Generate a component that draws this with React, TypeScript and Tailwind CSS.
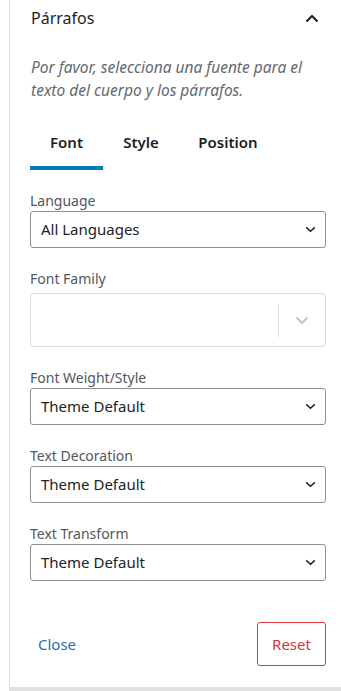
import React from "react";

const Chevron = ({ className = "" }: { className?: string }) => (
  <svg width="11" height="7" viewBox="0 0 11 7" className={className}>
    <path d="M1.2 1.4 L5.5 5.3 L9.8 1.4" fill="none" stroke="currentColor" strokeWidth="1.5" />
  </svg>
);

const Select = ({ label, value }: { label: string; value: string }) => (
  <div className="flex flex-col">
    <div className="text-[14px] leading-[19px] text-[#50575e]">{label}</div>
    <div className="mt-[1px] flex h-[37px] items-center justify-between rounded-[3px] border border-[#8c8f94] pl-[10px] pr-[9px] bg-white">
      <span className="text-[15px] text-[#1d2327]">{value}</span>
      <Chevron className="text-[#1d2327]" />
    </div>
  </div>
);

export default function App() {
  return (
    <div
      className="w-[341px] h-[691px] bg-white flex"
      style={{ fontFamily: '"Noto Sans", "Open Sans", sans-serif' }}
    >
      <div className="w-[9px] shrink-0" />
      <div className="flex-1 flex flex-col border-l border-[#dcdcde] border-b-[4px] border-b-[#e0e0e0]">
        <div className="flex items-center justify-between pl-[21px] pr-[22px] pt-[2px] h-[34px]">
          <span className="text-[16px] text-[#1e1e1e]">Párrafos</span>
          <svg width="14" height="9" viewBox="0 0 14 9" className="text-[#1e1e1e]">
            <path d="M1.5 7.5 L7 2 L12.5 7.5" fill="none" stroke="currentColor" strokeWidth="2" />
          </svg>
        </div>
        <div className="pl-[21px] pr-[20px] mt-[22px] text-[15.5px] italic leading-[23px] text-[#646970]">
          Por favor, selecciona una fuente para el texto del cuerpo y los párrafos.
        </div>
        <div className="mt-[29px] ml-[20px] flex">
          <div className="w-[73px] flex flex-col items-center">
            <span className="text-[15px] font-semibold text-[#1e1e1e] leading-[22px] h-[22px]">Font</span>
            <div className="mt-[13px] h-[4px] w-full bg-[#007cba]" />
          </div>
          <div className="w-[76px] flex justify-center">
            <span className="text-[15px] font-semibold text-[#1e1e1e] leading-[22px]">Style</span>
          </div>
          <div className="w-[98px] flex justify-center">
            <span className="text-[15px] font-semibold text-[#1e1e1e] leading-[22px]">Position</span>
          </div>
        </div>
        <div className="mt-[21px] ml-[20px] mr-[15px] flex flex-col gap-[21px]">
          <Select label="Language" value="All Languages" />
          <div className="flex flex-col">
            <div className="text-[14px] leading-[19px] text-[#50575e]">Font Family</div>
            <div className="mt-[5px] flex h-[54px] items-center rounded-[4px] border border-[#dcdcde] bg-white">
              <div className="flex-1" />
              <div className="h-[33px] w-px bg-[#dcdcde]" />
              <div className="w-[46px] flex justify-center">
                <svg width="14" height="9" viewBox="0 0 14 9" className="text-[#c3c4c7]">
                  <path d="M1.5 1.5 L7 7 L12.5 1.5" fill="none" stroke="currentColor" strokeWidth="2" />
                </svg>
              </div>
            </div>
          </div>
          <Select label="Font Weight/Style" value="Theme Default" />
          <Select label="Text Decoration" value="Theme Default" />
          <Select label="Text Transform" value="Theme Default" />
        </div>
        <div className="mt-[41px] ml-[20px] mr-[15px] flex items-center justify-between">
          <span className="ml-[8px] text-[15px] text-[#2271b1]">Close</span>
          <div className="flex h-[44px] w-[69px] items-center justify-center rounded-[3px] border border-[#d63638]">
            <span className="text-[15px] text-[#d63638]">Reset</span>
          </div>
        </div>
        <div className="flex-1" />
      </div>
    </div>
  );
}
